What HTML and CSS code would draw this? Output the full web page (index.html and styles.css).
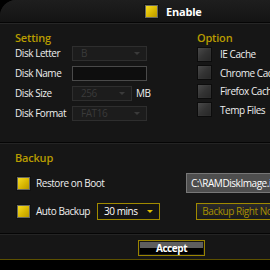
FILE: index.html
```html
<!DOCTYPE html>
<html>
  <head>
    <title>RAMDisk</title>
    <link rel="stylesheet" href="styles.css">
  </head>
  <body>
    <div class="panel">
      <div class="head">
        <span class="check yellow"></span>
        <span class="head-label">Enable</span>
      </div>

      <div class="main">
        <div class="col-setting">
          <h2>Setting</h2>
          <div class="row">
            <label>Disk Letter</label>
            <div class="select off wide"><span>B</span><i class="arrow"></i></div>
          </div>
          <div class="row">
            <label>Disk Name</label>
            <div class="text-input wide"></div>
          </div>
          <div class="row">
            <label>Disk Size</label>
            <div class="select off short"><span>256</span><i class="arrow"></i></div>
            <span class="unit">MB</span>
          </div>
          <div class="row">
            <label>Disk Format</label>
            <div class="select off wide"><span>FAT16</span><i class="arrow"></i></div>
          </div>
        </div>

        <div class="col-option">
          <h2>Option</h2>
          <div class="opt"><span class="check gray"></span>IE Cache</div>
          <div class="opt"><span class="check gray"></span>Chrome Cache</div>
          <div class="opt"><span class="check gray"></span>Firefox Cache</div>
          <div class="opt"><span class="check gray"></span>Temp Files</div>
        </div>
      </div>

      <div class="backup">
        <h2>Backup</h2>
        <div class="brow">
          <div class="blabel"><span class="check yellow"></span>Restore on Boot</div>
          <div class="path">C:\RAMDiskImage.img</div>
        </div>
        <div class="brow">
          <div class="blabel auto"><span class="check yellow"></span>Auto Backup</div>
          <div class="select on"><span>30 mins</span><i class="arrow"></i></div>
          <div class="btn-now">Backup Right Now</div>
        </div>
      </div>

      <div class="foot">
        <div class="accept"><span>Accept</span></div>
      </div>
    </div>
  </body>
</html>
```

FILE: styles.css
```css
html, body {
  margin: 0;
  width: 270px;
  height: 270px;
  overflow: hidden;
  background: #000;
}

body {
  font-family: "Open Sans", "DejaVu Sans", sans-serif;
  font-size: 10px;
  letter-spacing: -0.45px;
  color: #eee;
}

.panel {
  width: 300px;
  height: 260px;
  background: #161616;
  border-radius: 16px 16px 0 0;
  box-sizing: border-box;
  border-bottom: 1px solid #5c5000;
  overflow: hidden;
}

h2 {
  margin: 0;
  height: 13px;
  line-height: 13px;
  font-size: 11px;
  font-weight: 600;
  letter-spacing: -0.2px;
  color: #b99c00;
}

/* checkboxes */
.check {
  display: inline-block;
  box-sizing: border-box;
  flex: none;
}
.check.yellow {
  width: 13px;
  height: 13px;
  border: 1px solid #6a6a60;
  background: linear-gradient(135deg, #f6dc20, #d6b400 60%, #b89800);
  box-shadow: 0 0 0 1px #111;
}
.check.gray {
  width: 15px;
  height: 15px;
  border: 1px solid #0c0c0c;
  background: linear-gradient(135deg, #4a4a4a, #333 50%, #262626);
  box-shadow: inset 0 0 1px #555;
}

/* header */
.head {
  height: 22px;
  display: flex;
  align-items: center;
  padding-left: 145px;
  background: linear-gradient(#1e1e1e, #141414);
  border-bottom: 1px solid #050505;
  box-shadow: 0 1px 0 #262626;
}
.head-label {
  margin-left: 8px;
  font-weight: bold;
  font-size: 11px;
  letter-spacing: -0.2px;
  color: #fff;
}

/* setting + option */
.main {
  display: flex;
  padding: 8px 0 0 15px;
  height: 111px;
  border-bottom: 1px solid #050505;
  box-shadow: 0 1px 0 #242424;
}
.col-setting {
  width: 182px;
}
.row {
  height: 20px;
  display: flex;
  align-items: center;
}
.col-setting h2 {
  margin-bottom: -1px;
}
.row label {
  width: 57px;
}
.unit {
  margin-left: 4px;
}

.select, .text-input {
  box-sizing: border-box;
  height: 15px;
  display: flex;
  align-items: center;
}
.wide { width: 75px; }
.short { width: 60px; }
.select span {
  padding-left: 8px;
  flex: 1;
}
.select.off {
  border: 1px solid #2e2e2e;
  background: #1c1c1c;
  color: #3a3a3a;
}
.text-input {
  border: 1px solid #4a4a4a;
  background: #0e0e0e;
}
.arrow {
  width: 0;
  height: 0;
  border-left: 3px solid transparent;
  border-right: 3px solid transparent;
  border-top: 3px solid #3a3a3a;
  margin-right: 6px;
}

.col-option h2 {
  margin-bottom: 1px;
}
.opt {
  height: 18.5px;
  display: flex;
  align-items: center;
  white-space: nowrap;
}
.opt .check {
  margin-right: 8px;
}

/* backup */
.backup {
  padding: 8px 0 0 15px;
  height: 91px;
  box-sizing: border-box;
  border-bottom: 1px solid #050505;
  box-shadow: 0 1px 0 #242424;
}
.backup h2 {
  margin-bottom: 9px;
}
.brow {
  height: 20px;
  display: flex;
  align-items: center;
  margin-bottom: 8px;
}
.blabel {
  display: flex;
  align-items: center;
  width: 169px;
  padding-left: 2px;
}
.blabel.auto {
  width: 80px;
}
.blabel .check {
  margin-right: 6px;
}
.path {
  height: 18px;
  line-height: 18px;
  padding-left: 4px;
  width: 100px;
  background: #4e4e4e;
  border: 1px solid #777;
  color: #fff;
  white-space: nowrap;
}
.select.on {
  width: 63px;
  height: 17px;
  border: 1px solid #a08a00;
  background: #141414;
  color: #fff;
}
.select.on span {
  padding-left: 6px;
}
.select.on .arrow {
  border-top-color: #e0c000;
}
.btn-now {
  margin-left: 36px;
  height: 17px;
  line-height: 15px;
  width: 90px;
  box-sizing: border-box;
  border: 1px solid #a08a00;
  background: linear-gradient(#2a2a2a, #1a1a1a);
  color: #a89000;
  text-align: center;
  white-space: nowrap;
}

/* footer */
.foot {
  display: flex;
  padding: 6px 0 0 138px;
}
.accept {
  width: 67px;
  height: 16px;
  box-sizing: border-box;
  border: 1px solid #9a8400;
  padding: 1px;
}
.accept span {
  display: block;
  height: 12px;
  line-height: 12px;
  text-align: center;
  font-weight: bold;
  color: #fff;
  background: linear-gradient(#5e5e5e 50%, #000 50%);
}
```
